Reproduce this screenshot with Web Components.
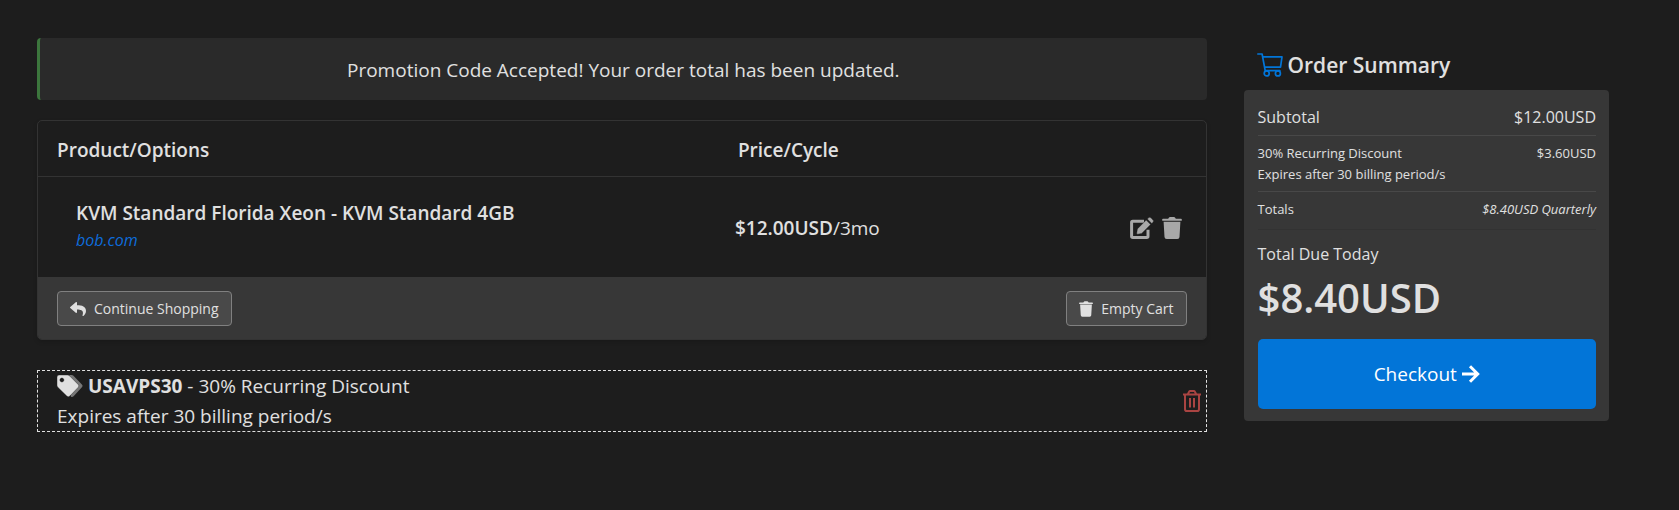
<!DOCTYPE html>
<html lang="en">
<head>
<meta charset="utf-8">
<title>Order Summary</title>
<style>
  body {
    margin: 0;
    background: #1d1d1d;
    color: #e0e0e0;
    font: 19px/30px "Open Sans", "Noto Sans", sans-serif;
  }
</style>
</head>
<body>
<cart-page>
  <cart-alert>Promotion Code Accepted! Your order total has been updated.</cart-alert>
  <cart-items></cart-items>
  <promo-code code="USAVPS30">30% Recurring Discount</promo-code>
  <order-summary slot="side"></order-summary>
</cart-page>

<script>
const icons = {
  trash: `<svg viewBox="0 0 20 22" fill="currentColor"><path d="M1 1.7h5.2L7 .6Q7.400 0 8 0h4q.6 0 1 .6l.8 1.100H19q.8 0 .8.8v.9q0 .4-.5.4H.7q-.5 0-.5-.4v-.9q0-.8.8-.8zM1.600 4.700h16.800l-.9 15.300q-.1 2-2.200 2H4.700q-2.100 0-2.200-2z"/></svg>`,
  edit: `<svg viewBox="0 0 24 22"><path d="M14 4.200H2.800q-1.200 0-1.200 1.200v13.900q0 1.200 1.200 1.200h14q1.200 0 1.200-1.200v-6.600" fill="none" stroke="currentColor" stroke-width="3"/><path d="M16.200 3.100l4.400 4.400L11.700 16.400l-4 .8q-1.200.1-1-1l.7-4.300zM17.300 2l1.200-1.200q1.200-1.200 2.400 0l2.100 2.100q1.100 1.200 0 2.300l-1.200 1.300z" fill="currentColor" stroke="#1d1d1d" stroke-width=".4"/></svg>`,
  bin: `<svg viewBox="0 0 18 22" fill="none" stroke="currentColor" stroke-width="2"><path d="M0 4.500h18M4.700 4.500L6 1.900Q6.400 1.100 7.200 1.100h3.600q.8 0 1.200.8l1.300 2.600M2 4.500v14.700q0 1.800 1.700 1.800h10.600q1.700 0 1.700-1.800V4.500M7 8v9.600M11 8v9.600"/></svg>`,
  reply: `<svg viewBox="0 0 512 448" fill="currentColor"><path d="M8.300 157.400L184.300 5.400c15.400-13.300 39.700-2.500 39.700 18.200v80c160.600 1.800 288 34 288 186.300 0 61.400-39.600 122.300-83.300 154.100-13.700 9.900-33.100-2.500-28.100-18.600C445.900 280.500 379.100 242 224 239.800v88c0 20.700-24.300 31.500-39.700 18.200l-176-152c-11.100-9.600-11.100-27 0-36.600z"/></svg>`,
  tags: `<svg viewBox="0 0 26 22"><path d="M12.500 0h2.200q.9 0 1.500.6l8.700 8.800q1.300 1.400 0 2.800L16.600 21.300q-1 .9-2.700.5z" fill="#777"/><path fill-rule="evenodd" d="M0 2q0-2 2-2h8.500q1.200 0 2 .8l8.600 8.600q1.500 1.500 0 3l-8.300 8.700q-1.500 1.500-3 0L.8 12.300Q0 11.500 0 10.300zM4.900 3a2 2 0 1 0 .01 0z" fill="currentColor" stroke="#1d1d1d" stroke-width=".4"/></svg>`,
  cart: `<svg viewBox="0 0 26 24" fill="none" stroke="currentColor" stroke-width="1.700" stroke-linecap="round" stroke-linejoin="round"><path d="M.8 1h4.300l3.100 16.700h14.600M5.600 3.900h19.400L23.500 14.200H7.500"/><circle cx="9.700" cy="20.400" r="2.500"/><circle cx="20.900" cy="20.400" r="2.500"/></svg>`,
  arrow: `<svg viewBox="0 0 18 18" fill="none" stroke="currentColor" stroke-width="3"><path d="M0 9h15.500M8 1.300L15.700 9 8 16.700"/></svg>`
};

const register = (name, html) => {
  const template = document.createElement('template');
  template.innerHTML = html;
  customElements.define(name, class extends HTMLElement {
    constructor() {
      super();
      this.attachShadow({ mode: 'open' }).append(template.content.cloneNode(true));
    }
    connectedCallback() {
      this.shadowRoot.querySelectorAll('[data-attr]').forEach(el => {
        el.textContent = this.getAttribute(el.dataset.attr);
      });
    }
  });
};

customElements.define('ui-icon', class extends HTMLElement {
  connectedCallback() {
    if (this.shadowRoot) return;
    this.attachShadow({ mode: 'open' }).innerHTML = `
      <style>
        :host { display: inline-block; flex: none; }
        svg { display: block; width: 100%; height: 100%; }
      </style>${icons[this.getAttribute('name')]}`;
  }
});

register('cart-page', `
  <style>
    :host {
      display: grid;
      grid-template-columns: minmax(0, 32fr) minmax(0, 10fr);
      column-gap: 37px;
      align-items: start;
      padding: 38px 70px 38px 37px;
    }
    main { display: flex; flex-direction: column; }
  </style>
  <main><slot></slot></main>
  <aside><slot name="side"></slot></aside>`);

register('cart-alert', `
  <style>
    :host {
      display: block;
      padding: 17px 16px 15px;
      margin-bottom: 20px;
      border-left: 3px solid #3c763d;
      border-radius: 4px;
      background: #2a2a2a;
      text-align: center;
    }
  </style>
  <slot></slot>`);

register('small-button', `
  <style>
    :host { display: block; }
    button {
      display: flex;
      align-items: center;
      gap: 8px;
      padding: 6px 12px 5px;
      border: 1px solid #808080;
      border-radius: 4px;
      background: #494949;
      color: inherit;
      font: inherit;
      font-size: 14px;
      line-height: 22px;
      cursor: pointer;
    }
  </style>
  <button type="button"><slot></slot></button>`);

register('cart-items', `
  <style>
    :host {
      display: block;
      margin-bottom: 30px;
      border: 1px solid #333;
      border-radius: 5px;
      overflow: hidden;
      box-shadow: 0 2px 4px rgba(0, 0, 0, .15);
    }
    table { width: 100%; border-collapse: collapse; table-layout: fixed; }
    col.price { width: 32%; }
    col.tools { width: 100px; }
    thead tr { border-bottom: 1px solid #333; }
    th { padding: 14px 0 11px 19px; text-align: left; font-weight: 600; }
    td { padding: 24px 0 22px; vertical-align: middle; }
    th + th { padding-left: 6px; }
    td + td { padding-left: 3px; }
    td:first-child { padding: 21px 0 25px 38px; }
    strong { font-weight: 600; }
    td a { display: block; color: #0d6cdb; font-size: 16px; line-height: 24px; font-style: italic; text-decoration: none; }
    .actions { display: flex; gap: 8px; justify-content: flex-end; padding-right: 24px; }
    .actions button { display: block; padding: 0; border: 0; background: none; color: #a8a8a8; cursor: pointer; }
    .actions ui-icon { display: block; height: 22px; }
    .edit { width: 24px; }
    .remove { width: 20px; }
    footer { display: flex; justify-content: space-between; align-items: center; padding: 14px 19px 13px; background: #373737; }
    .reply { width: 16px; height: 14px; }
    .empty { width: 14px; height: 16px; }
  </style>
  <table>
    <colgroup><col><col class="price"><col class="tools"></colgroup>
    <thead><tr><th scope="col">Product/Options</th><th scope="col">Price/Cycle</th><th></th></tr></thead>
    <tbody><tr>
      <td><strong>KVM Standard Florida Xeon - KVM Standard 4GB</strong><a href="#">bob.com</a></td>
      <td><strong>$12.00USD</strong>/3mo</td>
      <td><div class="actions">
        <button type="button" aria-label="Edit"><ui-icon class="edit" name="edit"></ui-icon></button>
        <button type="button" aria-label="Remove"><ui-icon class="remove" name="trash"></ui-icon></button>
      </div></td>
    </tr></tbody>
  </table>
  <footer>
    <small-button><ui-icon class="reply" name="reply"></ui-icon>Continue Shopping</small-button>
    <small-button><ui-icon class="empty" name="trash"></ui-icon>Empty Cart</small-button>
  </footer>`);

register('promo-code', `
  <style>
    :host { display: flex; justify-content: space-between; align-items: center; padding: 0 5px 0 19px; border: 1px dashed #e0e0e0; }
    .line { display: flex; align-items: center; gap: 5px; }
    .tags { width: 26px; height: 22px; }
    .bin { display: block; width: 18px; height: 22px; }
    button { padding: 0; border: 0; background: none; color: #a94442; cursor: pointer; }
  </style>
  <div>
    <div class="line"><ui-icon class="tags" name="tags"></ui-icon><span><b data-attr="code"></b> - <slot></slot></span></div>
    <div>Expires after 30 billing period/s</div>
  </div>
  <button type="button" aria-label="Remove promotion code"><ui-icon class="bin" name="bin"></ui-icon></button>`);

register('summary-row', `
  <style>
    :host { display: flex; justify-content: space-between; padding: 7px 0 6px; border-bottom: 1px solid #484848; font-size: 13px; line-height: 21px; }
  </style>
  <slot></slot><slot name="amount"></slot>`);

register('order-summary', `
  <style>
    :host { display: block; }
    h2 { display: flex; align-items: center; gap: 5px; margin: 0; padding: 12px 13px 10px; font-size: 21px; line-height: 30px; font-weight: 600; }
    h2 ui-icon { width: 26px; height: 24px; color: #0275d8; }
    section { padding: 8px 13px 12px 14px; border-radius: 4px; background: #373737; }
    .subtotal { font-size: 16px; line-height: 24px; }
    .totals { border-color: #323232; padding-bottom: 9px; }
    p { margin: 0; padding-top: 12px; font-size: 16px; line-height: 24px; }
    .due { display: block; margin: 8px 0 17px; font-size: 40px; line-height: 48px; font-weight: 600; }
    .checkout { display: flex; justify-content: center; align-items: center; gap: 5px; width: 100%; padding: 20px; border: 0; border-radius: 5px; background: #0275d8; color: #fff; font: inherit; cursor: pointer; }
    .arrow { width: 18px; height: 18px; }
  </style>
  <h2><ui-icon name="cart"></ui-icon>Order Summary</h2>
  <section>
    <summary-row class="subtotal">Subtotal<span slot="amount">$12.00USD</span></summary-row>
    <summary-row><span>30% Recurring Discount<br>Expires after 30 billing period/s</span><span slot="amount">$3.60USD</span></summary-row>
    <summary-row class="totals">Totals<em slot="amount">$8.40USD Quarterly</em></summary-row>
    <p>Total Due Today</p>
    <strong class="due">$8.40USD</strong>
    <button class="checkout" type="button">Checkout <ui-icon class="arrow" name="arrow"></ui-icon></button>
  </section>`);
</script>
</body>
</html>
